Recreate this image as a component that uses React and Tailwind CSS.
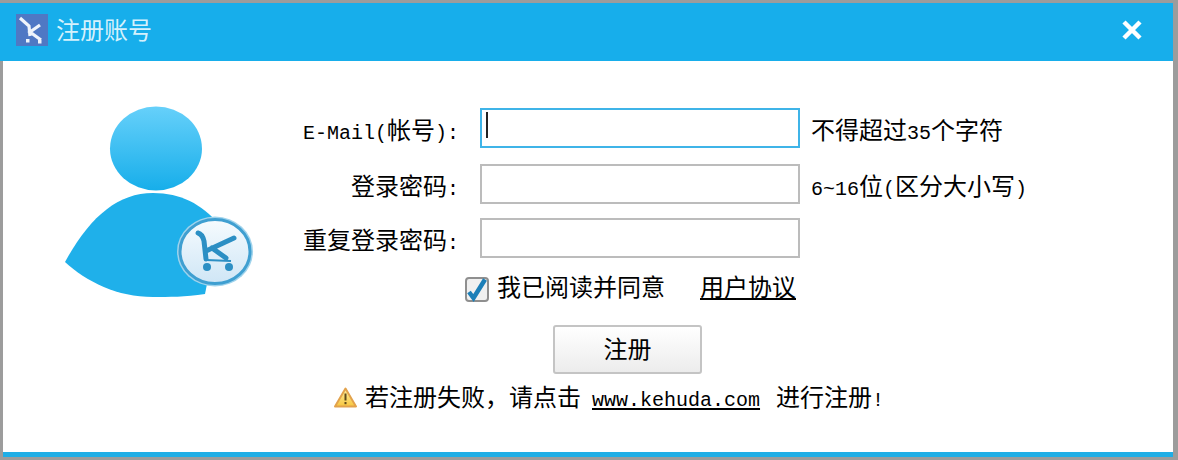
const CJK = "font-['Liberation_Mono','Noto_Sans_CJK_SC',monospace]";

function Latin({ children }) {
  return <span className="text-[20px] font-['Liberation_Mono',monospace]">{children}</span>;
}

function KLogo({ className }) {
  return (
    <svg viewBox="0 0 32 32" className={className}>
      <rect width="32" height="32" fill="#4f78c4" />
      <path d="M4 4 L13 12 L14 22 M24 11 L14 18 L25 26" fill="none" stroke="#eef4fb" strokeWidth="3.2" />
      <rect x="10" y="25" width="3.5" height="3.5" fill="#eef4fb" />
      <rect x="22" y="26" width="3.5" height="3.5" fill="#eef4fb" />
    </svg>
  );
}

function Avatar() {
  return (
    <svg viewBox="0 0 190 196" className="w-[190px] h-[196px] block">
      <defs>
        <linearGradient id="head" x1="0" y1="0" x2="0" y2="1">
          <stop offset="0" stopColor="#66d0fa" />
          <stop offset="1" stopColor="#17aeea" />
        </linearGradient>
        <linearGradient id="badge" x1="0" y1="0" x2="0" y2="1">
          <stop offset="0" stopColor="#f6fbfe" />
          <stop offset="1" stopColor="#cfe6f6" />
        </linearGradient>
      </defs>
      <ellipse cx="91" cy="44.5" rx="46" ry="42" fill="url(#head)" />
      <path d="M0 158 C24 114 52 89 88 89 C116 89 136 100 154 120 L140 190 C120 193 104 193 88 193 C52 193 22 178 0 158 Z" fill="#1fb0ea" />
      <ellipse cx="150" cy="147.5" rx="38" ry="35" fill="#9fd3ec" />
      <ellipse cx="150" cy="147.5" rx="35" ry="32" fill="url(#badge)" stroke="#3f9fd1" strokeWidth="3" />
      <path d="M133 129 C137 130 138 133 139 137 L141 155 M169 134 L141 147 M147 144 L161 154" fill="none" stroke="#2c8fc4" strokeWidth="5" strokeLinecap="round" strokeLinejoin="round" />
      <path d="M141 156 L166 157" fill="none" stroke="#2c8fc4" strokeWidth="2" />
      <circle cx="142" cy="163" r="4" fill="#2c8fc4" />
      <circle cx="164" cy="163" r="4" fill="#2c8fc4" />
    </svg>
  );
}

function Field({ label, focused, hint, className }) {
  return (
    <div className={`flex items-center h-[40px] ${className || ""}`}>
      <div className="w-[157px] shrink-0 whitespace-nowrap pt-[9px] text-right text-[24px] leading-none text-black">{label}</div>
      <div className={`ml-[21px] w-[320px] h-[40px] bg-white border-2 flex items-center pl-[4px] ${focused ? "border-[#3fb4e8]" : "border-[#bcbcbc]"}`}>
        {focused && <div className="w-[2px] h-[26px] bg-[#222] -mt-[6px]" />}
      </div>
      {hint && <div className="ml-[11px] whitespace-nowrap pt-[9px] text-[24px] leading-none text-black">{hint}</div>}
    </div>
  );
}

export default function App() {
  return (
    <div className={`w-[1178px] h-[460px] bg-[#9c9c9c] pt-[3px] pr-[5px] overflow-hidden ${CJK}`}>
      <div className="h-[58px] bg-[#17aeeb] flex items-center pl-[16px] pr-[30px] pb-[4px]">
        <KLogo className="w-[32px] h-[32px]" />
        <span className="ml-[8px] mt-[6px] text-[24px] text-[#d5f1fc]">注册账号</span>
        <svg viewBox="0 0 22 22" className="ml-auto w-[22px] h-[22px]">
          <path d="M3 3 L19 19 M19 3 L3 19" stroke="#fff" strokeWidth="4.5" />
        </svg>
      </div>

      <div className="ml-[3px] h-[391px] bg-white flex">
        <div className="ml-[62px] mt-[43px]">
          <Avatar />
        </div>
        <div className="ml-[47px] mt-[47px]">
          <div className="flex flex-col gap-[14px]">
            <Field
              focused
              className="mb-[2px]"
              label={<><Latin>E-Mail(</Latin>帐号<Latin>):</Latin></>}
              hint={<>不得超过<Latin>35</Latin>个字符</>}
            />
            <Field
              label={<>登录密码<Latin>:</Latin></>}
              hint={<><Latin>6~16</Latin>位<Latin>(</Latin>区分大小写<Latin>)</Latin></>}
            />
            <Field label={<>重复登录密码<Latin>:</Latin></>} />
          </div>

          <div className="mt-[19px] ml-[163px] flex items-center text-[24px] leading-none text-black">
            <svg viewBox="0 0 24 25" className="w-[24px] h-[25px]">
              <rect x="1" y="1" width="22" height="23" rx="3" fill="#f0f0f0" stroke="#8f8f8f" strokeWidth="2" />
              <path d="M4 15 L8.5 21 L20 2.5" fill="none" stroke="#1c7fb8" strokeWidth="4.5" />
            </svg>
            <span className="ml-[8px] pt-[1px]">我已阅读并同意</span>
            <span className="ml-[35px] pt-[1px] underline underline-offset-2">用户协议</span>
          </div>

          <div className="mt-[23px] ml-[251px] w-[149px] h-[49px] rounded-[3px] border-2 border-[#c4c4c4] bg-gradient-to-b from-white to-[#ececec] flex items-center justify-center pt-[4px] text-[24px] leading-none text-black">
            注册
          </div>

          <div className="mt-[11px] ml-[32px] flex items-center text-[24px] leading-none text-black whitespace-nowrap">
            <svg viewBox="0 0 23 21" className="w-[23px] h-[21px] -mt-[2px]">
              <defs>
                <linearGradient id="warn" x1="0" y1="0" x2="0" y2="1">
                  <stop offset="0" stopColor="#fff0a0" />
                  <stop offset="1" stopColor="#f7c640" />
                </linearGradient>
              </defs>
              <path d="M11.5 1.5 L22 19.5 H1 Z" fill="url(#warn)" stroke="#e2a24c" strokeWidth="2" strokeLinejoin="round" />
              <rect x="10.5" y="6.5" width="2" height="7" fill="#5f4a1a" />
              <rect x="10.5" y="15" width="2" height="2.2" fill="#5f4a1a" />
            </svg>
            <span className="ml-[8px] pt-[3px]">若注册失败，请点击</span>
            <span className="ml-[11px] pt-[3px] underline underline-offset-2"><Latin>www.kehuda.com</Latin></span>
            <span className="ml-[16px] pt-[3px]">进行注册<Latin>!</Latin></span>
          </div>
        </div>
      </div>
      <div className="ml-[3px] h-[5px] bg-[#1faee6]" />
    </div>
  );
}
